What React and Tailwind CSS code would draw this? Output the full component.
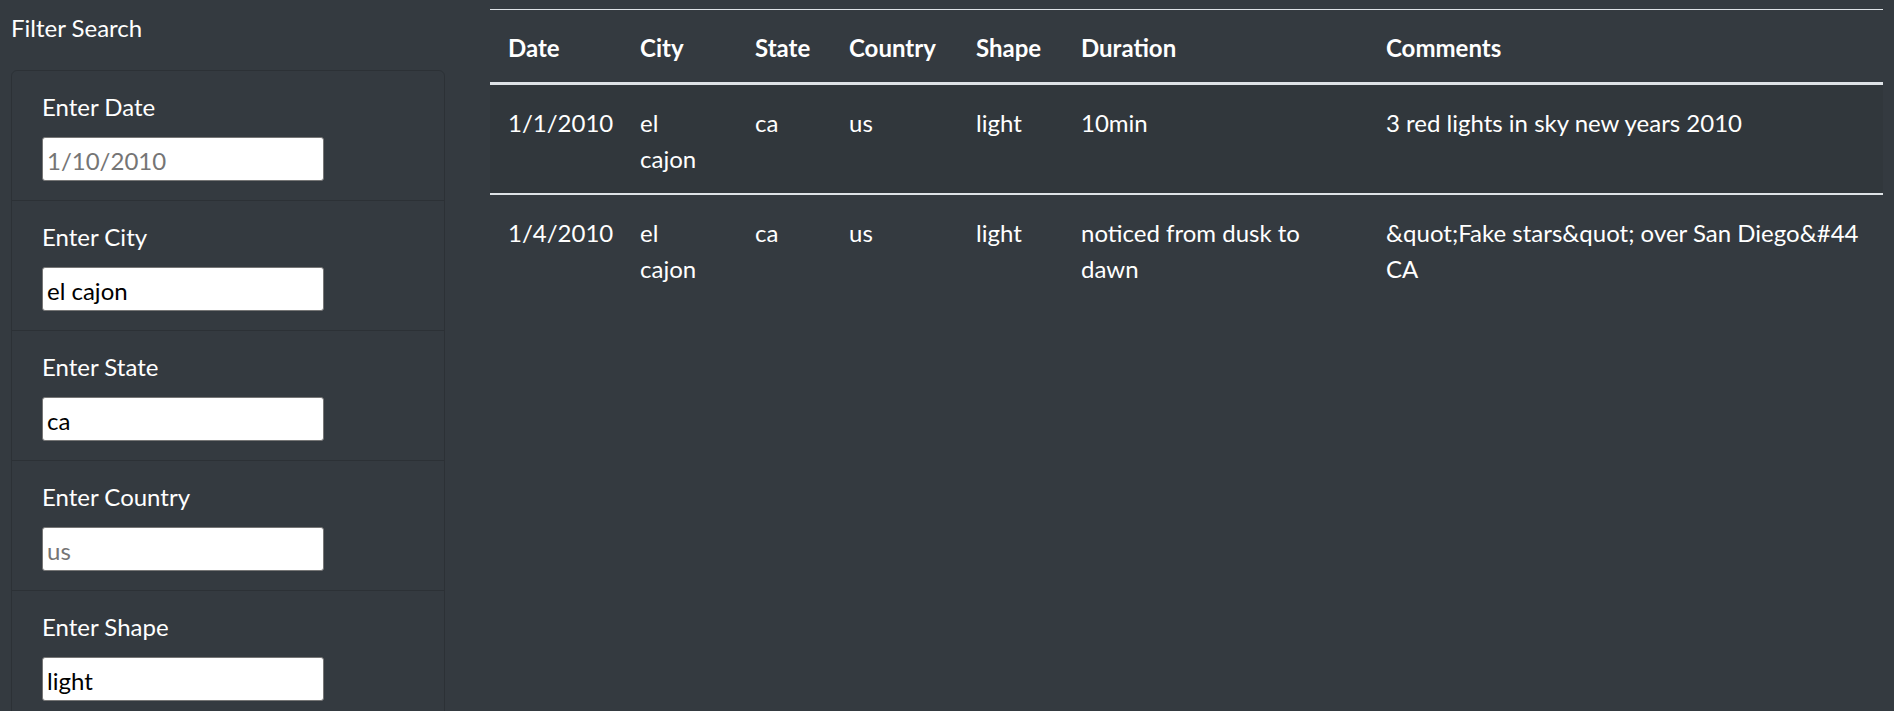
import React from 'react';

const filters = [
  { id: 'datetime', label: 'Enter Date', placeholder: '1/10/2010' },
  { id: 'city', label: 'Enter City', value: 'el cajon' },
  { id: 'state', label: 'Enter State', value: 'ca' },
  { id: 'country', label: 'Enter Country', placeholder: 'us' },
  { id: 'shape', label: 'Enter Shape', value: 'light' },
];

const sightings = [
  {
    datetime: '1/1/2010',
    city: 'el cajon',
    state: 'ca',
    country: 'us',
    shape: 'light',
    duration: '10min',
    comments: '3 red lights in sky new years 2010',
  },
  {
    datetime: '1/4/2010',
    city: 'el cajon',
    state: 'ca',
    country: 'us',
    shape: 'light',
    duration: 'noticed from dusk to dawn',
    comments: '&quot;Fake stars&quot; over San Diego&#44 CA',
  },
];

const columns = [
  { key: 'datetime', title: 'Date', width: 'w-[132px]' },
  { key: 'city', title: 'City', width: 'w-[115px]' },
  { key: 'state', title: 'State', width: 'w-[94px]' },
  { key: 'country', title: 'Country', width: 'w-[127px]' },
  { key: 'shape', title: 'Shape', width: 'w-[105px]' },
  { key: 'duration', title: 'Duration', width: 'w-[305px]' },
  { key: 'comments', title: 'Comments', width: 'w-auto' },
];

const App = () => {
  return (
    <div className="min-h-[711px] bg-[#343a40] text-[24px] leading-[36px] text-white font-['Segoe_UI',Lato,'Liberation_Sans',sans-serif]">
      <div className="flex">
        {/* filters */}
        <aside className="w-[445px] shrink-0 pl-[11px] pt-[10px]">
          <p className="mb-[24px]">Filter Search</p>
          <ul className="rounded-[6px] border border-[rgba(0,0,0,0.15)]">
            {filters.map((filter, index) => (
              <li
                key={filter.id}
                className={`px-[30px] py-[18px] ${index < filters.length - 1 ? 'border-b border-[rgba(0,0,0,0.15)]' : ''}`}
              >
                <label htmlFor={filter.id} className="mb-[12px] block">
                  {filter.label}
                </label>
                <div className="h-[45px]">
                  <input
                    id={filter.id}
                    type="text"
                    placeholder={filter.placeholder}
                    defaultValue={filter.value}
                    className="h-[44px] w-[282px] rounded-[3px] border border-[#767676] bg-white px-[4px] pt-[2px] text-[24px] text-black placeholder:text-[#757575]"
                  />
                </div>
              </li>
            ))}
          </ul>
        </aside>

        {/* results */}
        <main className="ml-[45px] w-[1393px] pt-[9px]">
          <table className="w-full table-fixed border-collapse text-left">
            <thead>
              <tr>
                {columns.map((col) => (
                  <th
                    key={col.key}
                    className={`${col.width} border-t border-b-[3px] border-[#dee2e6] px-[18px] pt-[20px] pb-[16px] align-bottom font-bold`}
                  >
                    {col.title}
                  </th>
                ))}
              </tr>
            </thead>
            <tbody>
              {sightings.map((row, i) => (
                <tr
                  key={i}
                  className={i % 2 === 0 ? 'bg-[rgba(0,0,0,0.05)]' : 'border-t-2 border-[#dee2e6]'}
                >
                  {columns.map((col) => (
                    <td
                      key={col.key}
                      className={`px-[18px] pt-[20px] pb-[16px] align-top ${col.key === 'city' ? 'pr-[26px]' : ''}`}
                    >
                      {row[col.key]}
                    </td>
                  ))}
                </tr>
              ))}
            </tbody>
          </table>
        </main>
      </div>
    </div>
  );
};

export default App;
